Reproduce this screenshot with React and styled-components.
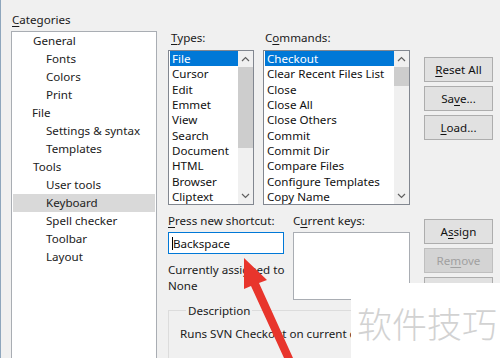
import React from "react";
import styled, { createGlobalStyle } from "styled-components";

const Global = createGlobalStyle`
  html, body { margin: 0; padding: 0; background: #f0f0f0; }
  body { font-family: "Noto Sans", "Liberation Sans", sans-serif; font-size: 11.6px; color: #111; }
`;

const Page = styled.div`
  position: relative;
  width: 500px;
  height: 358px;
  overflow: hidden;
  background: #f0f0f0;
  border-left: 1px solid #8ea6bd;
  box-sizing: border-box;
  display: flex;
  align-items: flex-start;
`;

const LeftCol = styled.div`
  margin-left: 10px;
  padding-top: 12px;
  width: 146px;
  display: flex;
  flex-direction: column;
`;

const Label = styled.div`
  line-height: 15px;
  height: 15px;
  white-space: nowrap;
  padding-left: ${(p) => p.$pad || 0}px;
  color: #1a1a1a;
  u { text-decoration: underline; text-underline-offset: 2px; }
`;

const TreeBox = styled.div`
  margin-top: 4px;
  height: 340px;
  background: #fff;
  border: 1px solid #a9adb3;
  padding: 0 1px;
`;

const TreeItem = styled.div`
  height: 18px;
  line-height: 18px;
  padding-left: ${(p) => (p.$child ? 33 : p.$file ? 19 : 20)}px;
  background: ${(p) => (p.$sel ? "#d9d9d9" : "transparent")};
  color: #222;
  white-space: nowrap;
`;

const MidCol = styled.div`
  margin-left: 11px;
  padding-top: 30px;
  width: 242px;
  display: flex;
  flex-direction: column;
`;

const ListsRow = styled.div`
  display: grid;
  grid-template-columns: 86px 147px;
  column-gap: 9px;
  row-gap: 5px;
`;

const ListBox = styled.div`
  position: relative;
  height: 155px;
  background: #fff;
  border: 1px solid #828790;
  box-sizing: border-box;
  display: flex;
  overflow: hidden;
`;

const Rows = styled.div`
  flex: 1;
  padding-left: 1px;
  min-width: 0;
`;

const Row = styled.div`
  height: 15.33px;
  line-height: 15.33px;
  padding-left: 2px;
  white-space: nowrap;
  overflow: hidden;
  background: ${(p) => (p.$sel ? "#0078d7" : "transparent")};
  color: ${(p) => (p.$sel ? "#fff" : "#111")};
`;

const ScrollBar = styled.div`
  width: 15px;
  background: #f0f0f0;
  display: flex;
  flex-direction: column;
  align-items: center;
`;

const Arrow = styled.div`
  height: 16px;
  display: flex;
  align-items: center;
  justify-content: center;
`;

const Track = styled.div`
  flex: 1;
  width: 100%;
  display: flex;
  flex-direction: column;
`;

const Thumb = styled.div`
  height: ${(p) => p.$h}px;
  background: #cdcdcd;
  width: 100%;
`;

const ShortcutGrid = styled.div`
  margin-top: 8px;
  display: grid;
  grid-template-columns: 116px 117px;
  column-gap: 9px;
  row-gap: 4px;
`;

const InputBox = styled.div`
  height: 22px;
  box-sizing: border-box;
  border: 1px solid #0078d7;
  background: #fff;
  display: flex;
  align-items: center;
  padding-left: 3px;
`;

const Caret = styled.span`
  display: inline-block;
  width: 1px;
  height: 13px;
  background: #000;
`;

const KeysBox = styled.div`
  height: 68px;
  box-sizing: border-box;
  border: 1px solid #a9adb3;
  background: #fff;
`;

const InputCol = styled.div`
  display: flex;
  flex-direction: column;
`;

const Assigned = styled.div`
  margin-top: 8px;
  line-height: 16px;
  white-space: nowrap;
  color: #1a1a1a;
`;

const Group = styled.fieldset`
  margin: 3px 0 0 0;
  padding: 8px 0 20px 11px;
  border: 1px solid #dcdcdc;
  border-right: none;
  width: 260px;
  box-sizing: border-box;
  legend {
    padding: 0 2px;
    margin-left: 6px;
    line-height: 15px;
    color: #1a1a1a;
  }
`;

const GroupText = styled.div`
  white-space: nowrap;
  line-height: 16px;
  color: #1a1a1a;
`;

const RightCol = styled.div`
  margin-left: 14px;
  padding-top: 57px;
  width: 69px;
  display: flex;
  flex-direction: column;
  gap: 4px;
`;

const Button = styled.div`
  height: 25px;
  box-sizing: border-box;
  border: 1px solid ${(p) => (p.$disabled ? "#bfbfbf" : "#adadad")};
  background: ${(p) => (p.$disabled ? "#d4d4d4" : "#e1e1e1")};
  color: ${(p) => (p.$disabled ? "#a0a0a0" : "#111")};
  display: flex;
  align-items: center;
  justify-content: center;
  white-space: nowrap;
  margin-top: ${(p) => p.$gapTop || 0}px;
  u { text-decoration: underline; text-underline-offset: 2px; }
`;

const Watermark = styled.div`
  position: absolute;
  left: 350px;
  top: 283px;
  right: 0;
  bottom: 0;
  background: #fff;
  display: flex;
  align-items: center;
  padding-left: 6px;
  padding-top: 3px;
  font-family: "Noto Sans CJK SC", sans-serif;
  font-size: 35px;
  font-weight: 300;
  color: #d2d2d2;
`;

const ArrowSvg = styled.svg`
  position: absolute;
  left: 0;
  top: 0;
  pointer-events: none;
`;

const Up = () => (
  <svg width="9" height="6" viewBox="0 0 9 6"><path d="M1 5 L4.5 1.5 L8 5" fill="none" stroke="#606060" strokeWidth="1.2" /></svg>
);
const Down = () => (
  <svg width="9" height="6" viewBox="0 0 9 6"><path d="M1 1 L4.5 4.5 L8 1" fill="none" stroke="#606060" strokeWidth="1.2" /></svg>
);

const tree = [
  ["General", 0], ["Fonts", 1], ["Colors", 1], ["Print", 1], ["File", 0, "file"],
  ["Settings & syntax", 1], ["Templates", 1], ["Tools", 0], ["User tools", 1],
  ["Keyboard", 1, "sel"], ["Spell checker", 1], ["Toolbar", 1], ["Layout", 1],
];
const types = ["File", "Cursor", "Edit", "Emmet", "View", "Search", "Document", "HTML", "Browser", "Cliptext"];
const commands = ["Checkout", "Clear Recent Files List", "Close", "Close All", "Close Others", "Commit", "Commit Dir", "Compare Files", "Configure Templates", "Copy Name"];

export default function App() {
  return (
    <>
      <Global />
      <Page>
        <LeftCol>
          <Label $pad={1}><u>C</u>ategories</Label>
          <TreeBox>
            {tree.map(([t, c, f]) => (
              <TreeItem key={t} $child={c === 1} $file={f === "file"} $sel={f === "sel"}>{t}</TreeItem>
            ))}
          </TreeBox>
        </LeftCol>
        <MidCol>
          <ListsRow>
            <Label $pad={3}><u>T</u>ypes:</Label>
            <Label $pad={2}>C<u>o</u>mmands:</Label>
            <ListBox>
              <Rows>{types.map((t, i) => <Row key={t} $sel={i === 0}>{t}</Row>)}</Rows>
              <ScrollBar>
                <Arrow><Up /></Arrow>
                <Track><Thumb $h={81} /></Track>
                <Arrow><Down /></Arrow>
              </ScrollBar>
            </ListBox>
            <ListBox>
              <Rows>{commands.map((t, i) => <Row key={t} $sel={i === 0}>{t}</Row>)}</Rows>
              <ScrollBar>
                <Arrow><Up /></Arrow>
                <Track><Thumb $h={19} /></Track>
                <Arrow><Down /></Arrow>
              </ScrollBar>
            </ListBox>
          </ListsRow>
          <ShortcutGrid>
            <Label><u>P</u>ress new shortcut:</Label>
            <Label>C<u>u</u>rrent keys:</Label>
            <InputCol>
              <InputBox><Caret />Backspace</InputBox>
              <Assigned>Currently assigned to<br />None</Assigned>
            </InputCol>
            <KeysBox />
          </ShortcutGrid>
          <Group>
            <legend>Description</legend>
            <GroupText>Runs SVN Checkout on current document</GroupText>
          </Group>
        </MidCol>
        <RightCol>
          <Button><u>R</u>eset All</Button>
          <Button>Sa<u>v</u>e...</Button>
          <Button><u>L</u>oad...</Button>
          <Button $gapTop={75}>A<u>s</u>sign</Button>
          <Button $disabled>Re<u>m</u>ove</Button>
          <Button>Modify</Button>
        </RightCol>
        <Watermark>软件技巧</Watermark>
        <ArrowSvg width="500" height="358" viewBox="0 0 500 358">
          <polygon points="243,258 266,280 258,283 292,358 283,358 250,286 243,289" fill="#e8352c" />
        </ArrowSvg>
      </Page>
    </>
  );
}
